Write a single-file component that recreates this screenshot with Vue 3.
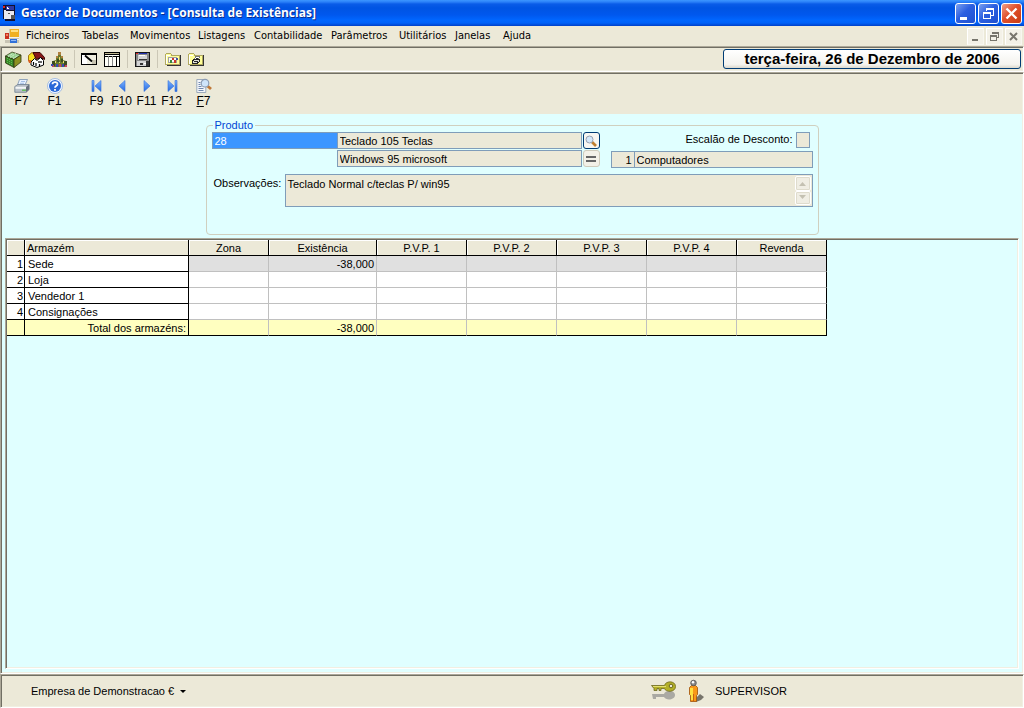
<script setup>
const menus = [
  { label: 'Ficheiros', size: 'm' },
  { label: 'Tabelas', size: 's' },
  { label: 'Movimentos', size: 'l' },
  { label: 'Listagens', size: 'm' },
  { label: 'Contabilidade', size: 'xl' },
  { label: 'Parâmetros', size: 'l' },
  { label: 'Utilitários', size: 'm' },
  { label: 'Janelas', size: 's' },
  { label: 'Ajuda', size: 's' },
]
const priceColumns = ['P.V.P. 1', 'P.V.P. 2', 'P.V.P. 3', 'P.V.P. 4', 'Revenda']
const stores = [
  { id: 1, name: 'Sede', stock: '-38,000' },
  { id: 2, name: 'Loja', stock: '' },
  { id: 3, name: 'Vendedor 1', stock: '' },
  { id: 4, name: 'Consignações', stock: '' },
]
const total = '-38,000'
</script>

<template>
  <div class="window">
    <svg class="defs" width="0" height="0" aria-hidden="true">
      <defs>
        <linearGradient id="arrow" x1="0" y1="0" x2="0" y2="1">
          <stop offset="0" stop-color="#7cb4ff" />
          <stop offset="1" stop-color="#2468e0" />
        </linearGradient>
      </defs>
    </svg>

    <header class="title-bar">
      <svg class="app-icon" width="16" height="16" viewBox="0 0 16 16" shape-rendering="crispEdges">
        <path fill="#101030" d="M1 0h12v16H3v-2H1z" />
        <path fill="#e02020" d="M1 1h2v2H1z" />
        <path fill="#3038a0" d="M4 1h8v4H4z" />
        <path fill="#e8e8f0" d="M4 6h8v8H4zM2 5h2v9H2z" />
        <path fill="#555" d="M6 8h2v1H6zM9 10h4v4H9z" />
        <path fill="#fff" d="M5 2h1v1h1v1H5z" />
      </svg>
      <h1>Gestor de Documentos - [Consulta de Existências]</h1>
      <button class="caption" aria-label="Minimizar">
        <svg width="19" height="19" viewBox="0 0 19 19"><path fill="#fff" d="M4 13h7v3H4z" /></svg>
      </button>
      <button class="caption" aria-label="Restaurar">
        <svg width="19" height="19" viewBox="0 0 19 19" shape-rendering="crispEdges">
          <path fill="none" stroke="#fff" d="M7.500 7V4.500h7V11.500H12M4.500 8.500h7v6h-7z" />
          <path fill="#fff" d="M7 4h8v2H7zM4 8h8v2H4z" />
        </svg>
      </button>
      <button class="caption close" aria-label="Fechar">
        <svg width="19" height="19" viewBox="0 0 19 19"><path stroke="#fff" stroke-width="2.400" d="M4.500 4.500l10 10M14.500 4.500l-10 10" /></svg>
      </button>
    </header>

    <nav class="menu-bar">
      <svg class="form-icon" width="16" height="16" viewBox="0 0 16 16" shape-rendering="crispEdges">
        <path fill="#c8c4b4" d="M5 1h10v14H1V5h4z" />
        <path fill="#f0b020" d="M6 1h9v8H6z" />
        <path fill="#ffe080" d="M7 2h7v2H7z" />
        <path fill="#c83020" d="M1 5h4v6H1z" />
        <path fill="#f08060" d="M2 6h2v2H2z" />
        <path fill="#f4f2ea" d="M1 11h14v1H1zM5 9h10v1H5z" />
        <path fill="#3070d8" d="M6 11h7v4H6z" />
        <path fill="#90b8f8" d="M7 12h5v1H7z" />
      </svg>
      <a v-for="m in menus" :key="m.label" href="#" :class="['menu', m.size]">{{ m.label }}</a>
      <span class="spacer"></span>
      <button class="mdi" aria-label="Minimizar documento">
        <svg width="15" height="15" viewBox="0 0 15 15"><path fill="#77756c" d="M4 10h6v2H4z" /></svg>
      </button>
      <button class="mdi" aria-label="Restaurar documento">
        <svg width="15" height="15" viewBox="0 0 15 15" shape-rendering="crispEdges">
          <path fill="none" stroke="#77756c" d="M5.500 5V3.500h6v5H10M3.500 6.500h6v5h-6z" />
          <path fill="#77756c" d="M5 3h7v2H5zM3 6h7v2H3z" />
        </svg>
      </button>
      <button class="mdi" aria-label="Fechar documento">
        <svg width="15" height="15" viewBox="0 0 15 15"><path stroke="#77756c" stroke-width="2" d="M4 4l7 7M11 4l-7 7" /></svg>
      </button>
    </nav>

    <div class="toolbar sunken">
      <button class="tool" aria-label="Produtos">
        <svg width="17" height="17" viewBox="0 0 17 17">
          <path fill="#98d090" stroke="#404820" stroke-width=".8" d="M.5 5L7 1l9 3-7 4.500z" />
          <path fill="#388828" stroke="#303810" stroke-width=".8" d="M.5 5v7L9 16.500v-8z" />
          <path fill="#8c9020" stroke="#303810" stroke-width=".8" d="M16 4v7l-7 5.500v-8z" />
          <path stroke="#f0fff0" stroke-dasharray="1 1" d="M3 5.500l5-3M5 6.500l6-4M8 7.500l5-3" />
          <path stroke="#60b850" stroke-dasharray="1 1" d="M2.500 7v6M4.500 8v6M6.500 9v6" />
        </svg>
      </button>
      <button class="tool" aria-label="Armazéns">
        <svg width="17" height="17" viewBox="0 0 17 17">
          <path fill="#f8e020" stroke="#a07810" d="M.5 9V4.500L4 1.500l3 2.500v6H.500z" />
          <path fill="#881818" stroke="#400808" d="M5 1.500h7l4.500 5v2l-4-2-4 2z" />
          <path fill="#fff" stroke="#000" d="M3 11l3.500-3.500L9 9.500l3.500-3 3 3V14L9 16.500 3 14z" />
          <path stroke="#000" stroke-width="1.200" d="M5.500 11v3M8 12v3M11 10v2M13 10v2M11.500 13v2" />
          <path fill="#d86020" d="M0 9h3v3H1z" />
        </svg>
      </button>
      <button class="tool" aria-label="Clientes">
        <svg width="17" height="17" viewBox="0 0 17 17">
          <path fill="#68782c" d="M7 1h3v4l2 1v3l3 1v6H2v-6l3-1V6l2-1z" />
          <path fill="#b08040" d="M7 1h3v3H7zM5 5h2v2H5zM10 5h2v2h-2z" />
          <path fill="#3c4c20" d="M1 10h3v5H1zM13 10h3v5h-3zM6 8h2v3H6zM10 8h2v3h-2z" />
          <path fill="#c84060" d="M1 14h2v2H1zM8 13h2v3H8zM14 14h2v2h-2z" />
          <path fill="#3848b0" d="M0 13h2v2H0zM5 13h2v3H5zM11 13h2v3h-2z" />
          <path fill="#e8e070" d="M8 6h1v3H8zM4 10h1v2H4zM12 10h1v2h-1zM8 11h1v1H8z" />
        </svg>
      </button>
      <span class="sep"></span>
      <button class="tool" aria-label="Editar">
        <svg width="17" height="17" viewBox="0 0 17 17" shape-rendering="crispEdges">
          <path fill="#f0eee0" stroke="#000" d="M.5 2.500h15v11H.500z" />
          <path fill="#000" d="M0 2h16v2H0z" />
          <path fill="#fff" d="M1 4h5v9H1z" />
          <path fill="#c8c4b0" d="M11 9h4v4h-4z" />
          <path stroke="#000" stroke-width="1.800" shape-rendering="auto" d="M4 4.500l7 6" />
        </svg>
      </button>
      <button class="tool" aria-label="Tabela">
        <svg width="17" height="17" viewBox="0 0 17 17" shape-rendering="crispEdges">
          <path fill="#fffff8" stroke="#000" d="M.5 1.500h15v14H.500z" />
          <path stroke="#000" d="M0 3.500h16M0 5.500h16" />
          <path stroke="#888" d="M4.500 5v10M8.500 5v10" />
          <path stroke="#000" d="M12.500 5v10" />
          <path fill="#c0b890" d="M1 2h14v1H1z" />
        </svg>
      </button>
      <span class="sep"></span>
      <button class="tool" aria-label="Guardar">
        <svg width="16" height="17" viewBox="0 0 16 17" shape-rendering="crispEdges">
          <path fill="#888" stroke="#181818" d="M.5 1.500h14v14H.500z" />
          <path fill="#d4d4d4" d="M3 4h9v5H3zM2 10h9v5H2z" />
          <path fill="#e02020" d="M1 2h2v1H1z" />
          <path fill="#2030b0" d="M4 2h8v1H4z" />
          <path fill="#333" d="M4 8h8v1H4zM5 12h3v2H5zM11 10h3v5h-3z" />
          <path fill="#fff" d="M4 4h6v1H4zM9 12h2v1H9z" />
        </svg>
      </button>
      <span class="sep"></span>
      <button v-for="kind in ['Abrir pasta', 'Imprimir pasta']" :key="kind" class="tool" :aria-label="kind">
        <svg width="16" height="16" viewBox="0 0 16 16" shape-rendering="crispEdges">
          <path fill="#333" d="M2 14h13V4h1v11H2z" />
          <path fill="#ffff98" stroke="#b0a860" d="M.5 3.500l1-1h4l1 1.500h8v9.500H.500z" />
          <path fill="#fff" d="M1 4h4v1H1zM1 5h1v8H1z" />
          <template v-if="kind === 'Abrir pasta'">
            <path fill="#f8f8f8" stroke="#a0a0a0" d="M3.500 6.500h8v5h-8z" />
            <path fill="#c83828" d="M7 7h2v2H7zM9 9h2v3H9z" />
            <path fill="#38883c" d="M5 9h2v3H5z" />
            <path fill="#4050a0" d="M11 7h2v2h-2z" />
          </template>
          <template v-else>
            <path fill="#fff" stroke="#777" d="M7.500 5.500h4l-1 3h-4z" />
            <path fill="#e0e0d8" stroke="#222" d="M4.500 9.500l2-1h5v2l-2 1.500h-5z" />
            <path fill="#222" d="M8 7h2v1H8zM6 10h4v1H6z" />
          </template>
        </svg>
      </button>
      <span class="spacer"></span>
      <button class="date">terça-feira, 26 de Dezembro de 2006</button>
    </div>

    <main class="document sunken">
      <div class="shortcuts">
        <button class="key">
          <svg width="16" height="16" viewBox="0 0 16 16">
            <path fill="#e8f2ff" stroke="#7890b0" stroke-width=".8" d="M5.500 1.500h8L11 7H3.500z" />
            <path stroke="#90b0e0" stroke-width=".8" d="M7 3.500h4M6 5.300h4" />
            <path fill="#b8c0c8" stroke="#708090" stroke-width=".8" d="M.8 8.500l3-2h11.400v5l-3 2.800H.8z" />
            <path fill="#f4f6f8" d="M1.500 8.800h10.500v2H1.500z" />
            <path fill="#68c060" d="M8 11.500h4v1.500H8z" />
            <path fill="#68707c" d="M12 9l3-2.200v4.600l-3 2.800z" />
          </svg>
          F7
        </button>
        <button class="key">
          <svg width="16" height="16" viewBox="0 0 16 16">
            <circle cx="8" cy="8" r="7.500" fill="#f4f8ff" stroke="#90b0e0" stroke-width=".8" />
            <circle cx="8" cy="8" r="6" fill="#2868d8" />
            <path fill="none" stroke="#fff" stroke-width="1.800" d="M5.500 6.300C5.500 3.300 10.500 3.300 10.500 6.200C10.500 7.800 8 7.600 8 9.800M8 11v1.800" />
          </svg>
          F1
        </button>
        <span class="gap"></span>
        <button class="key narrow">
          <svg width="16" height="16" viewBox="0 0 16 16"><path fill="url(#arrow)" stroke="#3470dc" stroke-width=".6" d="M3 2.500h2v11H3zM12 2.500v11L6 8z" /></svg>
          F9
        </button>
        <button class="key narrow">
          <svg width="16" height="16" viewBox="0 0 16 16"><path fill="url(#arrow)" stroke="#3470dc" stroke-width=".6" d="M11 2.500v11L5 8z" /></svg>
          F10
        </button>
        <button class="key narrow">
          <svg width="16" height="16" viewBox="0 0 16 16"><path fill="url(#arrow)" stroke="#3470dc" stroke-width=".6" d="M5 2.500v11L11 8z" /></svg>
          F11
        </button>
        <button class="key narrow">
          <svg width="16" height="16" viewBox="0 0 16 16"><path fill="url(#arrow)" stroke="#3470dc" stroke-width=".6" d="M4 2.500v11L10 8zM11 2.500h2v11h-2z" /></svg>
          F12
        </button>
        <button class="key">
          <svg width="16" height="16" viewBox="0 0 16 16">
            <path fill="#f4f6fa" stroke="#8898b0" stroke-width=".8" d="M.8 1.500h9v13h-9z" />
            <path stroke="#7088b0" d="M2.500 4.500h2M2.500 6.500h2M2.500 8.500h3M2.500 10.500h5M2.500 12.500h5" />
            <path stroke="#c07838" stroke-width="2.800" d="M11.500 8l3.500 3" />
            <circle cx="9" cy="5.200" r="3.800" fill="#cfe4fa" stroke="#8c9cb4" stroke-width="1.200" />
          </svg>
          <span><u>F</u>7</span>
        </button>
      </div>

      <fieldset class="product">
        <legend>Produto</legend>
        <div class="product-grid">
          <div class="names">
            <input class="field code" value="28" aria-label="Código do produto" />
            <input class="field name" value="Teclado 105 Teclas" aria-label="Nome do produto" />
            <button class="mini search" aria-label="Procurar produto">
              <svg width="14" height="14" viewBox="0 0 14 14">
                <path stroke="#c08030" stroke-width="2.600" d="M8 8l4 4" />
                <circle cx="5.500" cy="5.500" r="3.500" fill="#d4e8fa" stroke="#98a0b0" />
              </svg>
            </button>
            <input class="field name second" value="Windows 95 microsoft" aria-label="Segunda descrição" />
            <button class="mini equal" aria-label="Equivalentes">
              <svg width="14" height="14" viewBox="0 0 14 14"><path fill="#666" d="M2 4h10v2H2zM2 8h10v2H2z" /></svg>
            </button>
          </div>
          <div class="details">
            <div class="discount">
              <label for="discount">Escalão de Desconto:</label>
              <input id="discount" class="field" />
            </div>
            <div class="family">
              <input class="field number" value="1" aria-label="Código da família" />
              <input class="field" value="Computadores" aria-label="Família" />
            </div>
          </div>
        </div>
        <div class="notes">
          <label for="notes">Observações:</label>
          <div class="notes-box">
            <textarea id="notes">Teclado Normal c/teclas P/ win95</textarea>
            <div class="scroll">
              <button aria-label="Subir"><svg width="9" height="5" viewBox="0 0 9 5"><path fill="#c4c1b2" d="M1 5L4.500 1 8 5z" /></svg></button>
              <button aria-label="Descer"><svg width="9" height="5" viewBox="0 0 9 5"><path fill="#c4c1b2" d="M1 0l3.500 4L8 0z" /></svg></button>
            </div>
          </div>
        </div>
      </fieldset>

      <section class="grid-frame sunken">
        <table>
          <colgroup>
            <col class="c-index" /><col class="c-store" /><col class="c-zone" /><col class="c-stock" />
            <col v-for="p in priceColumns" :key="p" class="c-price" />
          </colgroup>
          <thead>
            <tr>
              <th></th>
              <th class="left">Armazém</th>
              <th>Zona</th>
              <th>Existência</th>
              <th v-for="p in priceColumns" :key="p">{{ p }}</th>
            </tr>
          </thead>
          <tbody>
            <tr v-for="s in stores" :key="s.id" :class="{ current: s.id === 1 }">
              <td class="index">{{ s.id }}</td>
              <td class="store">{{ s.name }}</td>
              <td></td>
              <td class="right">{{ s.stock }}</td>
              <td v-for="p in priceColumns" :key="p"></td>
            </tr>
          </tbody>
          <tfoot>
            <tr>
              <td class="index"></td>
              <td class="store right">Total dos armazéns:</td>
              <td></td>
              <td class="right">{{ total }}</td>
              <td v-for="p in priceColumns" :key="p"></td>
            </tr>
          </tfoot>
        </table>
      </section>
    </main>

    <footer class="status sunken">
      <button class="company">
        Empresa de Demonstracao €
        <svg width="6" height="3" viewBox="0 0 6 3"><path d="M0 0h6L3 3z" /></svg>
      </button>
      <div class="user">
        <svg width="26" height="22" viewBox="0 0 26 22">
          <path fill="#aaa9a3" d="M1 14h12c1-4 11-4 11 1s-9 6-11 2H5v2H2z" />
          <path fill="#b4b028" stroke="#6c6820" stroke-width=".8" d="M.5 5.500h13c1-5 11-5 11 1s-10 6-11 2H10v2H8v-2H6v2H3v-2z" />
          <path stroke="#e4e070" d="M2 6.500h13" />
          <circle cx="20" cy="6" r="1.800" fill="#ece9d8" stroke="#6c6820" />
        </svg>
        <svg width="18" height="24" viewBox="0 0 18 24">
          <path fill="#77746a" d="M9 19l4-4 4 3-3 3-5 2z" />
          <path fill="#f89818" stroke="#a05008" stroke-width=".8" d="M2.500 8.500l2-2h4l2 2v7l-1 1v6h-6v-6l-1-1z" />
          <path fill="#ffe040" d="M3 9h3v12H4v-5H3z" />
          <path stroke="#c86010" d="M6.500 15v7" />
          <circle cx="6.500" cy="4" r="2.800" fill="#888" stroke="#555" stroke-width=".8" />
          <circle cx="6" cy="3.200" r="1.200" fill="#fff" />
        </svg>
        <span>SUPERVISOR</span>
      </div>
    </footer>
  </div>
</template>

<style>
body {
  margin: 0;
  background: #ece9d8;
}
</style>

<style scoped>
* {
  box-sizing: border-box;
}
.window {
  display: flex;
  flex-direction: column;
  min-height: 100vh;
  background: #ece9d8;
  color: #000;
  font: 11px/14px "Liberation Sans", Arial, sans-serif;
}
button,
input,
textarea {
  margin: 0;
  padding: 0;
  border: 0;
  background: none;
  color: inherit;
  font: inherit;
}
svg {
  display: block;
  flex: none;
}
.defs {
  position: absolute;
}
.spacer {
  flex: 1;
}
.sunken {
  border: 1px solid;
  border-color: #aca899 #fff #fff #aca899;
  box-shadow: inset 1px 1px #716f64, inset -1px -1px #f1efe2;
}
.title-bar {
  display: flex;
  align-items: center;
  gap: 2px;
  height: 26px;
  padding: 0 2px;
  background: linear-gradient(#3c96ff 0, #2a80f8 2px, #0a5ce8 4px, #0054e3 8px, #0058ee 15px, #0066ff 20px, #0062f8 23px, #0040c8 26px);
}
.title-bar h1 {
  flex: 1;
  margin: 0;
  color: #fff;
  font: bold 12px/18px "Open Sans", sans-serif;
  text-shadow: 1px 1px #0a2c8c;
}
.caption {
  width: 21px;
  height: 21px;
  border: 1px solid #fff;
  border-radius: 3px;
  background: linear-gradient(135deg, #7ba0f0, #2c5fe0 45%, #1f50d0);
}
.caption.close {
  background: linear-gradient(135deg, #f0a088, #e0502c 45%, #c83c14);
}
.app-icon {
  margin-right: 1px;
}
.menu-bar {
  display: flex;
  align-items: center;
  height: 20px;
  padding: 0 2px 0 4px;
  font: 11px/16px "DejaVu Sans Condensed", sans-serif;
}
.form-icon {
  margin-right: 6px;
}
.menu {
  color: #000;
  text-decoration: none;
  white-space: nowrap;
}
.menu.s {
  width: 48px;
}
.menu.m {
  width: 56px;
}
.menu.l {
  width: 68px;
}
.menu.xl {
  width: 77px;
}
.mdi {
  width: 17px;
  height: 17px;
  margin-left: 2px;
  border: 1px solid;
  border-color: #fff #f8f7f0 #f8f7f0 #fff;
  background: #f3f1e7;
}
.toolbar {
  display: flex;
  align-items: center;
  height: 26px;
  padding: 0 2px 0 1px;
}
.tool {
  display: flex;
  justify-content: center;
  width: 23px;
}
.sep {
  width: 1px;
  height: 18px;
  margin: 0 3px;
  background: #cbc7b6;
}
.date {
  width: 298px;
  height: 20px;
  border: 1px solid #003c74;
  border-radius: 3px;
  background: linear-gradient(#fff, #f4f3ee 80%, #dcd8cc);
  font-size: 15px;
  font-weight: bold;
  line-height: 18px;
}
.document {
  display: flex;
  flex: 1;
  flex-direction: column;
  padding: 1px 4px 4px;
  background: #e0ffff;
}
.shortcuts {
  display: flex;
  height: 40px;
  margin: 0 -3px 5px;
  padding: 4px 3px 0;
  background: #ece9d8;
}
.key {
  display: flex;
  flex-direction: column;
  align-items: center;
  width: 33px;
  font-size: 12px;
}
.key.narrow {
  width: 25px;
}
.gap {
  width: 13px;
}
.key:last-child {
  margin-left: 3px;
}
.product {
  width: 613px;
  max-width: 100%;
  height: 116px;
  margin: 0 auto 3px;
  padding: 0 5px;
  border: 1px solid #d0d0bf;
  border-radius: 4px;
}
.product legend {
  margin-left: 1px;
  padding: 0 2px;
  color: #0046d5;
  line-height: 13px;
}
.product-grid {
  display: flex;
  justify-content: space-between;
}
.names {
  display: grid;
  grid-template-columns: 125px 245px 18px;
  grid-auto-rows: 17px;
  row-gap: 1px;
}
.field {
  min-width: 0;
  height: 17px;
  padding: 0 2px;
  border: 1px solid #7f9db9;
  background: #ece9d8;
}
.field.code {
  border-right: 0;
  background: #3c96ff;
  color: #fff;
}
.second {
  grid-column: 2;
}
.mini {
  display: flex;
  align-items: center;
  justify-content: center;
  margin-left: 1px;
  border: 1px solid #003c74;
  border-radius: 3px;
  background: #f8f7f2;
}
.mini.equal {
  border-color: #d0ccbc;
  background: #f3f1e8;
}
.details {
  display: flex;
  flex-direction: column;
  align-items: flex-end;
  gap: 3px;
}
.discount {
  display: flex;
  gap: 3px;
  margin-right: 3px;
}
.discount input {
  width: 14px;
  height: 16px;
}
.family {
  display: grid;
  grid-template-columns: 23px 179px;
}
.family .number {
  border-right: 0;
  text-align: right;
}
.notes {
  display: flex;
  gap: 4px;
  margin-top: 6px;
}
.notes label {
  width: 69px;
  padding: 2px 0 0 2px;
}
.notes-box {
  display: flex;
  flex: 1;
  height: 33px;
  padding: 1px;
  border: 1px solid #7f9db9;
  background: #ece9d8;
}
.notes textarea {
  flex: 1;
  padding: 1px;
  resize: none;
  overflow: hidden;
}
.scroll {
  display: flex;
  flex-direction: column;
  width: 16px;
}
.scroll button {
  display: flex;
  flex: 1;
  align-items: center;
  justify-content: center;
  border: 1px solid #fff;
  border-radius: 2px;
  background: #f0eee4;
  box-shadow: inset 0 0 0 1px #dfdccd;
}
.grid-frame {
  flex: 1;
  padding: 1px;
}
table {
  width: 820px;
  border-collapse: separate;
  border-spacing: 0;
  table-layout: fixed;
  background: #fff;
}
.c-index {
  width: 18px;
}
.c-store {
  width: 164px;
}
.c-zone {
  width: 80px;
}
.c-stock {
  width: 108px;
}
.c-price {
  width: 90px;
}
th,
td {
  height: 16px;
  padding: 2px 2px 0;
  border: solid #c0c0c0;
  border-width: 0 1px 1px 0;
  line-height: 13px;
  text-align: left;
  white-space: nowrap;
}
th {
  border-color: #000;
  background: #ece9d8;
  box-shadow: inset 1px 1px #fff;
  font-weight: normal;
  text-align: center;
}
th.left {
  text-align: left;
}
td.index {
  padding-right: 1px;
  padding-left: 1px;
  border-color: #000;
  text-align: right;
}
td.store {
  padding-left: 3px;
  border-color: #000;
}
td.right {
  padding-right: 2px;
  text-align: right;
}
td:last-child {
  border-right-color: #000;
}
.current td {
  background: #e0e0e0;
}
.current td.index,
.current td.store {
  background: #fff;
}
tfoot td {
  border-bottom-color: #000;
  background: #ffffc0;
}
.status {
  display: flex;
  align-items: center;
  height: 34px;
  padding: 0 30px;
}
.company {
  display: flex;
  align-items: center;
  gap: 6px;
}
.user {
  display: flex;
  flex: 0 0 342px;
  align-items: center;
  gap: 10px;
  margin-left: auto;
}
</style>
